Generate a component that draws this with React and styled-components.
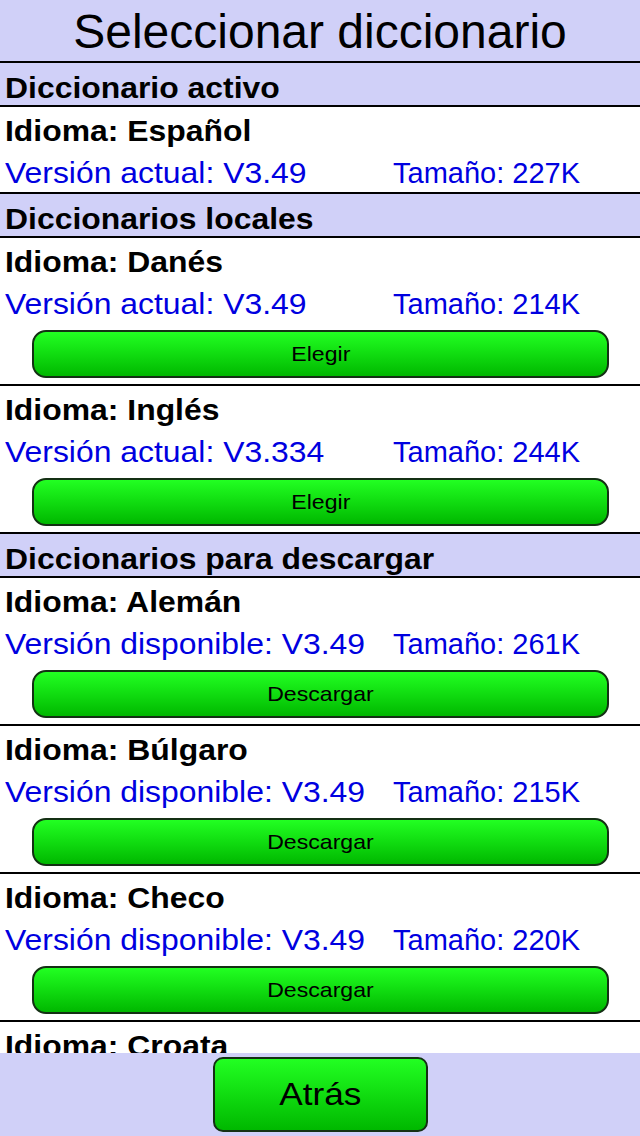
import React from 'react'
import styled, { createGlobalStyle } from 'styled-components'

const GlobalStyle = createGlobalStyle`
  html, body {
    margin: 0;
    padding: 0;
    background: #ffffff;
  }
  body {
    font-family: "Liberation Sans", Arial, sans-serif;
  }
`

const Screen = styled.div`
  width: 640px;
  height: 1136px;
  display: flex;
  flex-direction: column;
  overflow: hidden;
  background: #ffffff;
`

const TitleBar = styled.div`
  height: 59px;
  padding-top: 2px;
  background: #d0d0f8;
  border-bottom: 2px solid #000;
  font-size: 48px;
  line-height: 59px;
  color: #000;
  text-align: center;
`

const List = styled.div`
  flex: 1;
  overflow: hidden;
`

const Wide = styled.span`
  display: inline-block;
  white-space: nowrap;
  transform: scaleX(${({ $scale }) => $scale || 1.1});
  transform-origin: ${({ $center }) => ($center ? 'center' : 'left')} center;
`

const SectionHeader = styled.div`
  height: 34px;
  padding: 8px 0 0 5px;
  background: #d0d0f8;
  border-bottom: 2px solid #000;
  font-size: 29px;
  font-weight: bold;
  line-height: 34px;
  color: #000;
`

const Item = styled.div`
  display: flex;
  flex-direction: column;
  padding: 5px 0 ${({ $withButton }) => ($withButton ? '4px' : '0')};
  border-bottom: 2px solid #000;
`

const Language = styled.div`
  padding-left: 5px;
  font-size: 29px;
  font-weight: bold;
  line-height: 38px;
  color: #000;
`

const Info = styled.div`
  display: grid;
  grid-template-columns: 388px 1fr;
  margin-top: 4px;
  padding-left: 5px;
  font-size: 29px;
  line-height: 38px;
  color: #0000e0;
`

const GreenButton = styled.button`
  box-sizing: border-box;
  display: flex;
  align-items: center;
  justify-content: center;
  height: ${({ $big }) => ($big ? '75px' : '48px')};
  padding: 0;
  border: 2px solid #143014;
  border-radius: ${({ $big }) => ($big ? '10px' : '14px')};
  background: linear-gradient(to bottom, #22ff22 0%, #12e012 45%, #00b800 100%);
  font-family: "Liberation Sans", Arial, sans-serif;
  font-size: ${({ $big }) => ($big ? '32px' : '21px')};
  color: #000;
  cursor: pointer;
`

const ItemButton = styled(GreenButton)`
  margin: 7px 31px 2px 32px;
`

const Footer = styled.div`
  height: 83px;
  flex-shrink: 0;
  display: flex;
  align-items: center;
  justify-content: center;
  background: #d0d0f8;
`

const BackButton = styled(GreenButton)`
  width: 215px;
`

const sections = [
  {
    title: 'Diccionario activo',
    items: [{ lang: 'Español', label: 'Versión actual', version: 'V3.49', size: '227K' }],
  },
  {
    title: 'Diccionarios locales',
    action: 'Elegir',
    items: [
      { lang: 'Danés', label: 'Versión actual', version: 'V3.49', size: '214K' },
      { lang: 'Inglés', label: 'Versión actual', version: 'V3.334', size: '244K' },
    ],
  },
  {
    title: 'Diccionarios para descargar',
    action: 'Descargar',
    items: [
      { lang: 'Alemán', label: 'Versión disponible', version: 'V3.49', size: '261K' },
      { lang: 'Búlgaro', label: 'Versión disponible', version: 'V3.49', size: '215K' },
      { lang: 'Checo', label: 'Versión disponible', version: 'V3.49', size: '220K' },
      { lang: 'Croata', label: 'Versión disponible', version: 'V3.49', size: '233K' },
    ],
  },
]

function DictionaryItem({ item, action }) {
  return (
    <Item $withButton={!!action}>
      <Language>
        <Wide>Idioma: {item.lang}</Wide>
      </Language>
      <Info>
        <Wide>{item.label}: {item.version}</Wide>
        <Wide $scale={1}>Tamaño: {item.size}</Wide>
      </Info>
      {action && (
        <ItemButton>
          <Wide $center>{action}</Wide>
        </ItemButton>
      )}
    </Item>
  )
}

export default function App() {
  return (
    <>
      <GlobalStyle />
      <Screen>
        <TitleBar>Seleccionar diccionario</TitleBar>
        <List>
          {sections.map((section) => (
            <React.Fragment key={section.title}>
              <SectionHeader>
                <Wide>{section.title}</Wide>
              </SectionHeader>
              {section.items.map((item) => (
                <DictionaryItem key={item.lang} item={item} action={section.action} />
              ))}
            </React.Fragment>
          ))}
        </List>
        <Footer>
          <BackButton $big>
            <Wide $center>Atrás</Wide>
          </BackButton>
        </Footer>
      </Screen>
    </>
  )
}
